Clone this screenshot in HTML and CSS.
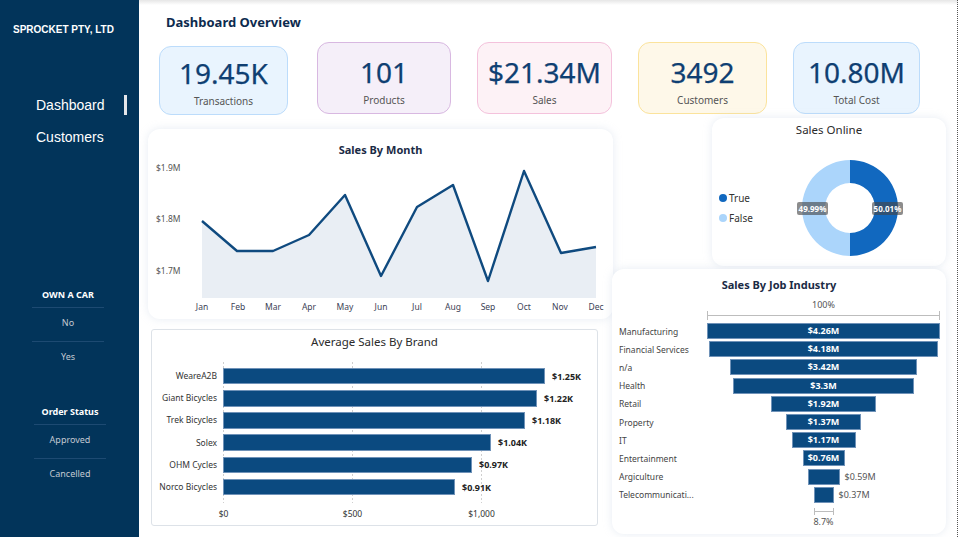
FILE: index.html
```html
<!DOCTYPE html>
<html lang="en">
<head>
<meta charset="utf-8">
<title>Sprocket Dashboard</title>
<link rel="stylesheet" href="styles.css">
</head>
<body>
<div class="app">
  <aside class="sidebar">
    <div class="brand">SPROCKET PTY, LTD</div>
    <nav class="nav">
      <a class="nav-item active">Dashboard</a>
      <a class="nav-item">Customers</a>
    </nav>
    <div class="filter filter-car">
      <div class="filter-title">OWN A CAR</div>
      <div class="filter-item">No</div>
      <div class="filter-item">Yes</div>
    </div>
    <div class="filter filter-status">
      <div class="filter-title">Order Status</div>
      <div class="filter-item">Approved</div>
      <div class="filter-item">Cancelled</div>
    </div>
  </aside>

  <main class="main">
    <h1 class="page-title">Dashboard Overview</h1>

    <div class="kpis">
      <div class="kpi kpi-tx"><div class="kpi-value">19.45K</div><div class="kpi-label">Transactions</div></div>
      <div class="kpi kpi-prod"><div class="kpi-value">101</div><div class="kpi-label">Products</div></div>
      <div class="kpi kpi-sales"><div class="kpi-value">$21.34M</div><div class="kpi-label">Sales</div></div>
      <div class="kpi kpi-cust"><div class="kpi-value">3492</div><div class="kpi-label">Customers</div></div>
      <div class="kpi kpi-cost"><div class="kpi-value">10.80M</div><div class="kpi-label">Total Cost</div></div>
    </div>

    <div class="lower">
      <div class="col-left">
        <section class="card month-card">
          <h2 class="card-title bold">Sales By Month</h2>
          <svg class="month-svg" width="465" height="160" viewBox="0 0 465 160">
            <path d="M54,62 L89,92 L125,92 L161,76 L197,36 L233,117 L269,48 L305,26 L340,122 L376,12 L413,94 L448,88 L448,139 L54,139 Z" fill="#e9eef4"/>
            <polyline points="54,62 89,92 125,92 161,76 197,36 233,117 269,48 305,26 340,122 376,12 413,94 448,88" fill="none" stroke="#0f4a7f" stroke-width="2.4" stroke-linejoin="round"/>
            <g class="ylab">
              <text x="8" y="12">$1.9M</text>
              <text x="8" y="63">$1.8M</text>
              <text x="8" y="115">$1.7M</text>
            </g>
            <g class="xlab">
              <text x="54" y="151">Jan</text>
              <text x="90" y="151">Feb</text>
              <text x="125" y="151">Mar</text>
              <text x="161" y="151">Apr</text>
              <text x="197" y="151">May</text>
              <text x="233" y="151">Jun</text>
              <text x="269" y="151">Jul</text>
              <text x="305" y="151">Aug</text>
              <text x="340" y="151">Sep</text>
              <text x="376" y="151">Oct</text>
              <text x="412" y="151">Nov</text>
              <text x="448" y="151">Dec</text>
            </g>
          </svg>
        </section>

        <section class="brand-card">
          <h2 class="card-title light">Average Sales By Brand</h2>
          <div class="brand-chart">
            <div class="brand-labels">
              <div>WeareA2B</div>
              <div>Giant Bicycles</div>
              <div>Trek Bicycles</div>
              <div>Solex</div>
              <div>OHM Cycles</div>
              <div>Norco Bicycles</div>
            </div>
            <div class="brand-plot">
              <div class="brand-row"><div class="hbar" style="width:322px"></div><span class="hval">$1.25K</span></div>
              <div class="brand-row"><div class="hbar" style="width:314px"></div><span class="hval">$1.22K</span></div>
              <div class="brand-row"><div class="hbar" style="width:302px"></div><span class="hval">$1.18K</span></div>
              <div class="brand-row"><div class="hbar" style="width:268px"></div><span class="hval">$1.04K</span></div>
              <div class="brand-row"><div class="hbar" style="width:249px"></div><span class="hval">$0.97K</span></div>
              <div class="brand-row"><div class="hbar" style="width:232px"></div><span class="hval">$0.91K</span></div>
            </div>
          </div>
          <div class="brand-axis"><span>$0</span><span>$500</span><span>$1,000</span></div>
        </section>
      </div>

      <div class="col-right">
        <section class="card online-card">
          <h2 class="card-title light">Sales Online</h2>
          <div class="online-body">
            <ul class="legend">
              <li><i class="dot dot-true"></i>True</li>
              <li><i class="dot dot-false"></i>False</li>
            </ul>
            <svg class="donut" width="126" height="110" viewBox="0 0 126 110">
              <path d="M63,7 A48,48 0 0 1 63,103 L63,80 A25,25 0 0 0 63,30 Z" fill="#1168bf"/>
              <path d="M63,7 A48,48 0 0 0 63,103 L63,80 A25,25 0 0 1 63,30 Z" fill="#abd5fb"/>
              <rect x="10" y="49" width="31" height="13" rx="2" fill="rgba(70,70,70,0.62)"/>
              <rect x="85" y="49" width="31" height="13" rx="2" fill="rgba(70,70,70,0.62)"/>
              <text class="dlab" x="25.5" y="58.8">49.99%</text>
              <text class="dlab" x="100.5" y="58.8">50.01%</text>
            </svg>
          </div>
        </section>

        <section class="card industry-card">
          <h2 class="card-title bold">Sales By Job Industry</h2>
          <div class="funnel-pct">100%</div>
          <div class="range range-top"></div>
          <div class="funnel">
            <div class="frow"><span class="flabel">Manufacturing</span><div class="fcell"><div class="fbar" style="width:233px">$4.26M</div></div></div>
            <div class="frow"><span class="flabel">Financial Services</span><div class="fcell"><div class="fbar" style="width:229px">$4.18M</div></div></div>
            <div class="frow"><span class="flabel">n/a</span><div class="fcell"><div class="fbar" style="width:187px">$3.42M</div></div></div>
            <div class="frow"><span class="flabel">Health</span><div class="fcell"><div class="fbar" style="width:181px">$3.3M</div></div></div>
            <div class="frow"><span class="flabel">Retail</span><div class="fcell"><div class="fbar" style="width:105px">$1.92M</div></div></div>
            <div class="frow"><span class="flabel">Property</span><div class="fcell"><div class="fbar" style="width:75px">$1.37M</div></div></div>
            <div class="frow"><span class="flabel">IT</span><div class="fcell"><div class="fbar" style="width:64px">$1.17M</div></div></div>
            <div class="frow"><span class="flabel">Entertainment</span><div class="fcell"><div class="fbar" style="width:42px">$0.76M</div></div></div>
            <div class="frow"><span class="flabel">Argiculture</span><div class="fcell"><div class="fbar" style="width:32px"><span class="fout">$0.59M</span></div></div></div>
            <div class="frow"><span class="flabel">Telecommunicati...</span><div class="fcell"><div class="fbar" style="width:20px"><span class="fout">$0.37M</span></div></div></div>
          </div>
          <div class="range range-bottom"></div>
          <div class="funnel-pct funnel-pct-bottom">8.7%</div>
        </section>
      </div>
    </div>
  </main>
</div>
</body>
</html>
```

FILE: styles.css
```css
* { box-sizing: border-box; margin: 0; padding: 0; }
html, body { width: 960px; height: 537px; overflow: hidden; background: #fff; }
body { font-family: "Noto Sans", "Open Sans", sans-serif; color: #333; }

.app { display: flex; width: 960px; height: 537px; }

/* Sidebar */
.sidebar {
  width: 139px; flex: none; background: #02345a; color: #fff;
  display: flex; flex-direction: column; padding-top: 24px;
}
.brand {
  font-family: "Liberation Sans", Arial, sans-serif; font-weight: 700;
  font-size: 10px; line-height: 12px; padding-left: 13px; white-space: nowrap;
}
.nav { margin-top: 53px; display: flex; flex-direction: column; }
.nav-item {
  display: block; position: relative; height: 32px; line-height: 32px; padding-left: 36px;
  font-family: "Liberation Sans", Arial, sans-serif; font-size: 14px; color: #fff;
}
.nav-item.active::after {
  content: ""; position: absolute; right: 12px; top: 6px; width: 3px; height: 20px; background: #e4e6ea;
}
.filter { width: 72px; }
.filter-car { margin: 134px 0 0 32px; }
.filter-status { margin: 28px 0 0 34px; }
.filter-title {
  font-size: 9px; font-weight: 700; line-height: 16px; text-align: center;
  padding-bottom: 4px; border-bottom: 1px solid #1d4a72; color: #fff; white-space: nowrap;
}
.filter-item {
  height: 34px; font-size: 9px; line-height: 30px; text-align: center; color: #c3c9d2;
  border-bottom: 1px solid #1d4a72;
}
.filter-item:last-child { border-bottom: none; }

/* Main */
.main {
  width: 819px; flex: none; border-right: 1px dotted #555;
  background: linear-gradient(#e6e6e6, #fff 5px);
  padding-top: 14px;
}
.page-title { margin-left: 27px; font-size: 13px; font-weight: 700; line-height: 16px; color: #0d2b4e; }

.kpis { display: flex; gap: 26px; margin: 12px 0 0 20px; align-items: flex-start; }
.kpi { height: 72px; border-radius: 12px; border: 1px solid; text-align: center; padding-top: 11px; }
.kpi-value { font-size: 28px; line-height: 36px; color: #0f3f72; white-space: nowrap; -webkit-text-stroke: 0.25px #0f3f72; }
.kpi-label { font-size: 10px; line-height: 14px; margin-top: 3px; color: #555; }
.kpi-tx { width: 129px; margin-right: 3px; margin-top: 4px; height: 69px; padding-top: 8px; background: #e9f4fe; border-color: #bcdcfb; }
.kpi-prod { width: 134px; background: #f5eff9; border-color: #d8b8e1; }
.kpi-sales { width: 135px; background: #fdf2f6; border-color: #f4c2dc; }
.kpi-cust { width: 129px; background: #fef8e9; border-color: #fbe39c; }
.kpi-cost { width: 127px; background: #e9f4fe; border-color: #bcdcfb; }

.lower { display: flex; margin: 3px 0 0 9px; }
.col-left { width: 464px; flex: none; }
.col-right { width: 334px; flex: none; }

.card { background: #fff; border-radius: 12px; box-shadow: 0 0 8px rgba(185, 200, 222, 0.35); }
.card-title { font-size: 11.5px; line-height: 16px; text-align: center; color: #1b2b45; }
.card-title.bold { font-weight: 700; font-size: 11px; }
.card-title.light { font-weight: 400; color: #2b2b2b; }

/* Sales by month */
.month-card { margin-top: 11px; width: 465px; height: 190px; padding-top: 13px; }
.month-svg { display: block; margin-top: 1px; }
.month-svg text { font-family: "Noto Sans", sans-serif; }
.ylab text { font-size: 8.5px; fill: #555; }
.xlab text { font-size: 8.5px; fill: #3c4256; text-anchor: middle; }

/* Average sales by brand */
.brand-card {
  margin: 10px 0 0 3px; width: 447px; height: 197px; background: #fff;
  border: 1px solid #dde2e8; border-radius: 3px; padding-top: 4px;
}
.brand-chart { display: flex; margin-top: 12px; }
.brand-labels { width: 71px; padding-right: 6px; padding-top: 3px; text-align: right; }
.brand-labels div { height: 22.2px; line-height: 22.2px; font-size: 8.5px; color: #333; white-space: nowrap; }
.brand-plot {
  flex: 1; padding: 3px 0 5px;
  background-image: linear-gradient(#cfcfcf 50%, transparent 50%), linear-gradient(#cfcfcf 50%, transparent 50%), linear-gradient(#cfcfcf 50%, transparent 50%);
  background-size: 1px 4px;
  background-position: 0 0, 129px 0, 258px 0;
  background-repeat: repeat-y;
}
.brand-row { height: 22.2px; display: flex; align-items: center; }
.hbar { height: 16.5px; background: #0b4a80; border: 1px solid #6f92b8; }
.hval { margin-left: 7px; font-size: 9px; font-weight: 700; color: #222; }
.brand-axis { display: flex; margin: 4px 0 0 7px; }
.brand-axis span { width: 129px; text-align: center; font-size: 8.5px; line-height: 14px; color: #333; }

/* Sales online */
.online-card { margin-left: 100px; width: 234px; height: 148px; padding-top: 4px; }
.online-body { display: flex; margin-top: 15px; }
.legend { list-style: none; width: 75px; padding: 35px 0 0 7px; }
.legend li { display: flex; align-items: center; height: 20px; font-size: 10px; color: #333; }
.dot { display: inline-block; width: 8px; height: 8px; border-radius: 50%; margin-right: 2px; }
.dot-true { background: #1168bf; }
.dot-false { background: #abd5fb; }
.donut { display: block; }
.dlab { font-family: "Noto Sans", sans-serif; font-size: 8px; font-weight: 700; fill: #fff; text-anchor: middle; }

/* Sales by job industry */
.industry-card { margin-top: 3px; width: 334px; height: 265px; padding-top: 8px; }
.funnel-pct { margin: 6px 0 0 95px; width: 233px; text-align: center; font-size: 9px; line-height: 12px; color: #555; }
.funnel-pct-bottom { margin-top: 1px; }
.range {
  height: 9px; border-left: 1px solid #bdbdbd; border-right: 1px solid #bdbdbd;
  background: linear-gradient(transparent 4px, #bdbdbd 4px, #bdbdbd 5px, transparent 5px);
}
.range-top { margin-left: 95px; width: 233px; }
.range-bottom { margin: 4px 0 0 201.5px; width: 20px; height: 7px;
  background: linear-gradient(transparent 3px, #bdbdbd 3px, #bdbdbd 4px, transparent 4px); }
.funnel { margin-top: 2px; }
.frow { display: grid; grid-template-columns: 95px 233px; height: 18.2px; align-items: center; }
.flabel { padding-left: 7px; font-size: 8.5px; color: #444; white-space: nowrap; overflow: hidden; }
.fcell { display: flex; justify-content: center; align-items: center; }
.fbar {
  position: relative; height: 16px; background: #0b4a80; border: 1px solid #6f92b8;
  color: #fff; font-size: 9px; font-weight: 700; line-height: 14px; text-align: center; white-space: nowrap;
}
.fout { position: absolute; left: calc(100% + 6px); top: 0; color: #555; font-weight: 400; }
```
